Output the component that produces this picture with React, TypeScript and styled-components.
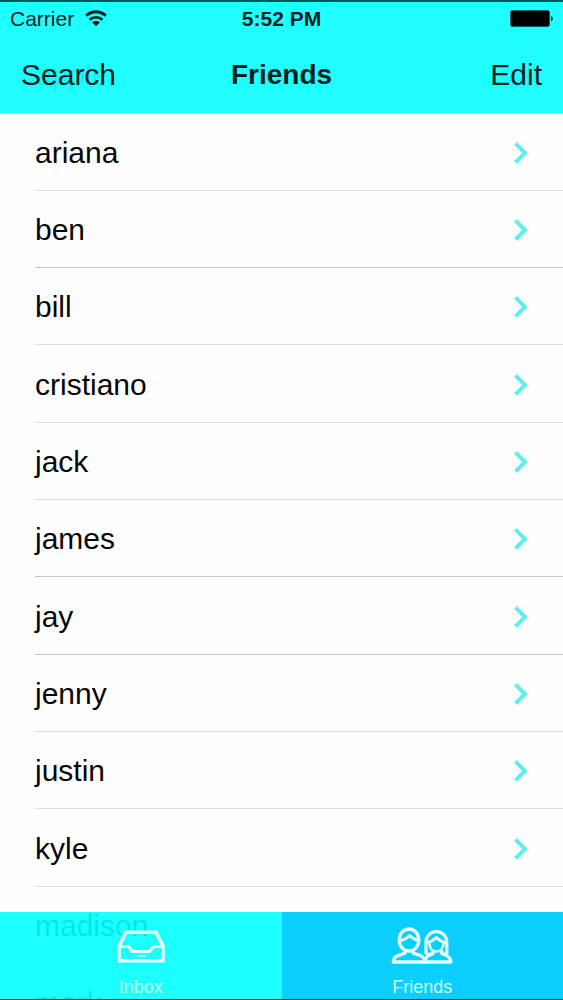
import React from "react";
import styled, { createGlobalStyle } from "styled-components";

const GlobalStyle = createGlobalStyle`
  * { box-sizing: border-box; }
  body {
    margin: 0;
    background: #fefefe;
    color: #060606;
    font-family: "Liberation Sans", Arial, sans-serif;
  }
`;

const Screen = styled.div`
  position: relative;
  height: 100vh;
  overflow: hidden;
`;

const TopBar = styled.header`
  position: absolute;
  inset: 0 0 auto;
  z-index: 1;
  height: 113px;
  border-top: 2px solid #06505c;
  background: rgba(20, 255, 255, 0.95);
  color: #03201f;
`;

const StatusBar = styled.div`
  display: grid;
  grid-template-columns: 1fr auto 1fr;
  align-items: center;
  height: 34px;
  padding: 0 10px;
  font-size: 21px;
  line-height: 24px;
`;

const Carrier = styled.span`
  display: flex;
  align-items: center;
  gap: 11px;
`;

const Clock = styled.time`
  font-weight: bold;
`;

const Battery = styled.svg`
  justify-self: end;
`;

const NavBar = styled.nav`
  display: grid;
  grid-template-columns: 1fr auto 1fr;
  align-items: center;
  height: 77px;
  padding: 0 21px;
`;

const Title = styled.h1`
  margin: 0;
  font-size: 28px;
  line-height: 34px;
`;

const NavButton = styled.button<{ $end?: boolean }>`
  justify-self: ${(p) => (p.$end ? "end" : "start")};
  padding: 0;
  border: 0;
  background: none;
  color: inherit;
  font-family: inherit;
  font-size: 30px;
  line-height: 34px;
`;

const List = styled.ul`
  margin: 0;
  padding: 36px 0 0 35px;
  list-style: none;
`;

const Row = styled.li<{ $strong?: boolean }>`
  height: 77px;
  border-bottom: 1px solid ${(p) => (p.$strong ? "#c6c6c8" : "#dfdfe1")};

  &:nth-child(3n + 2) {
    height: 78px;
  }
`;

const RowLink = styled.a`
  display: flex;
  align-items: center;
  justify-content: space-between;
  height: 100%;
  padding: 2px 35px 0 0;
  color: inherit;
  font-size: 30px;
  line-height: 34px;
  text-decoration: none;
`;

const TabBar = styled.nav`
  position: absolute;
  inset: auto 0 0;
  z-index: 1;
  display: grid;
  grid-template-columns: 1fr 1fr;
  height: 88px;
  border-bottom: 1px solid #07424e;
`;

const Tab = styled.a<{ $active?: boolean }>`
  display: flex;
  flex-direction: column;
  align-items: center;
  justify-content: flex-end;
  gap: 12px;
  padding-bottom: 2px;
  background: ${(p) => (p.$active ? "#0acffc" : "rgba(3, 255, 255, 0.9)")};
  color: ${(p) => (p.$active ? "#d3fbff" : "#c4ffff")};
  font-size: 18px;
  line-height: 20px;
  text-decoration: none;
`;

const friends = [
  { name: "apple" },
  { name: "ariana" },
  { name: "ben", strong: true },
  { name: "bill" },
  { name: "cristiano" },
  { name: "jack" },
  { name: "james", strong: true },
  { name: "jay", strong: true },
  { name: "jenny" },
  { name: "justin" },
  { name: "kyle" },
  { name: "madison" },
  { name: "mark" },
];

function WifiIcon() {
  return (
    <svg width="22" height="18" viewBox="0 0 22 18" fill="none" aria-hidden="true">
      <path d="M1.2 5.700C6.7 .4 15.3.4 20.8 5.700" stroke="#03201f" strokeWidth="2.8" />
      <path d="M4.6 9.700c3.600-3.300 9.200-3.300 12.800 0" stroke="#03201f" strokeWidth="2.700" />
      <path d="M7.2 12.400c2.200-1.900 5.400-1.900 7.600 0L11 16.200z" fill="#03201f" />
    </svg>
  );
}

function BatteryIcon() {
  return (
    <Battery width="43" height="18" viewBox="0 0 43 18" role="img" aria-label="Battery full">
      <rect x="0.5" y="0.5" width="39" height="16" rx="2" fill="#000" stroke="#075b5b" />
      <path d="M41 6c2.4.7 2.4 4.6 0 5.3z" fill="#03201f" />
    </Battery>
  );
}

function Chevron() {
  return (
    <svg width="14" height="22" viewBox="0 0 14 22" fill="none" aria-hidden="true">
      <path d="M1.500 1.5 11 11 1.500 20.5" stroke="#5eeeee" strokeWidth="4" />
    </svg>
  );
}

function InboxIcon() {
  return (
    <svg width="50" height="36" viewBox="0 0 50 36" fill="none" stroke="#e6ffff" aria-hidden="true">
      <path d="M3 17 10 3.200h30L47 17v14.700H3z" strokeWidth="3.600" />
      <path d="M3 17.5h9.500l4 5h17l4-5H47" strokeWidth="3.200" />
      <path d="M20.500 27h9.500" stroke="#9dffff" strokeWidth="2" />
    </svg>
  );
}

function FriendsIcon() {
  return (
    <svg
      width="62"
      height="38"
      viewBox="0 0 62 38"
      fill="none"
      stroke="#e6fcff"
      strokeWidth="3.300"
      strokeLinejoin="round"
      aria-hidden="true"
    >
      <ellipse cx="18" cy="13" rx="9.800" ry="11" />
      <path d="M8.200 14c4-.8 7.500-2.500 10.300-5.500 2 2.200 4.800 4 9 5" strokeWidth="3" />
      <path d="M14 23v3C9 28.500 2.500 28 2.200 35h57.600c0-5.500-4.500-6.500-9-8.500v-3" />
      <path d="M22 23v3c4.500 2 11.500 2 12 9 .3-5.500 4-6.700 8-8.500v-3" />
      <path d="M35 27V15.500C35 9 39.500 4.700 45.300 4.700S55.800 9 55.800 15.500V27" />
      <path d="M35.500 16c4.500-1 7-2.700 9.800-5.300 2.500 2.400 5.500 4.300 10 5.300" strokeWidth="3" />
      <path d="M38.500 16.500c0 5 3 8 6.900 8s7-3 7-8" strokeWidth="2.600" />
      <path d="M34.500 27.200c3 0 5-.4 7-1.400M56.300 27.200c-2 0-4-.4-5.500-1.200" strokeWidth="2.400" />
    </svg>
  );
}

export default function App() {
  return (
    <Screen>
      <GlobalStyle />
      <TopBar>
        <StatusBar>
          <Carrier>
            Carrier
            <WifiIcon />
          </Carrier>
          <Clock>5:52 PM</Clock>
          <BatteryIcon />
        </StatusBar>
        <NavBar>
          <NavButton type="button">Search</NavButton>
          <Title>Friends</Title>
          <NavButton type="button" $end>
            Edit
          </NavButton>
        </NavBar>
      </TopBar>
      <List>
        {friends.map((f) => (
          <Row key={f.name} $strong={f.strong}>
            <RowLink href={`#${f.name}`}>
              {f.name}
              <Chevron />
            </RowLink>
          </Row>
        ))}
      </List>
      <TabBar>
        <Tab href="#inbox">
          <InboxIcon />
          Inbox
        </Tab>
        <Tab href="#friends" $active aria-current="page">
          <FriendsIcon />
          Friends
        </Tab>
      </TabBar>
    </Screen>
  );
}
